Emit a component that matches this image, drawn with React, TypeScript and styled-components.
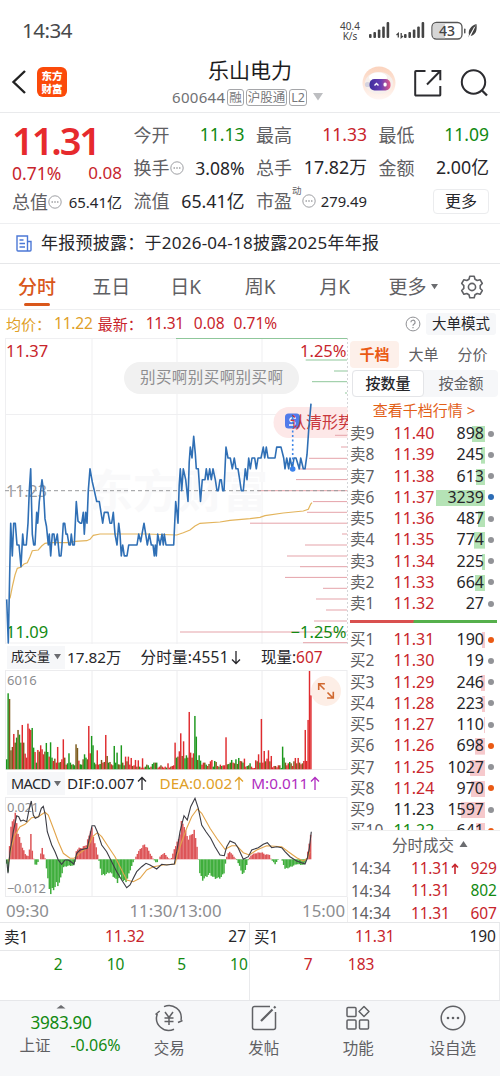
import React from 'react';
import styled, { createGlobalStyle } from 'styled-components';

const RED = '#c8252c';
const GREEN = '#128a12';
const INK = '#26262a';
const GREY = '#5f6063';
const FONT = '"Noto Sans", "Noto Sans CJK SC", sans-serif';

const Global = createGlobalStyle`
  * { box-sizing: border-box; }
  body { margin: 0; background: #fff; font-family: ${FONT}; color: ${INK}; }
  svg { display: block; flex: none; }
  svg text { font-family: ${FONT}; }
`;

const Page = styled.div`
  width: 500px;
  height: 1076px;
  overflow: hidden;
  display: flex;
  flex-direction: column;
  white-space: nowrap;
`;

const Txt = styled.span<{ $s: number; $c?: string; $ls?: number; $w?: number }>`
  font-size: ${p => p.$s}px;
  color: ${p => p.$c ?? INK};
  letter-spacing: ${p => p.$ls ?? 0}px;
  font-weight: ${p => p.$w ?? 400};
  line-height: 1.2;
`;

/* ---------- status bar and header ---------- */
const StatusBar = styled.div`
  height: 58px;
  flex: none;
  display: flex;
  align-items: center;
  justify-content: space-between;
  padding: 3px 22px 0 22px;
`;
const StatusRight = styled.div`
  display: flex;
  align-items: center;
  height: 24px;
`;
const NetSpeed = styled.div`
  width: 24px;
  font-size: 10px;
  line-height: 10px;
  color: #444;
  text-align: center;
  margin-right: 7px;
`;
const Header = styled.header`
  height: 55px;
  flex: none;
  display: grid;
  grid-template-columns: 160px 180px 160px;
  border-bottom: 1px solid #e9eaec;
`;
const HeaderLeft = styled.div`
  display: flex;
  align-items: center;
  padding: 0 0 6px 11px;
  gap: 10px;
`;
const AppLogo = styled.div`
  width: 30px;
  height: 30px;
  border-radius: 6px;
  background: #fb4a0a;
  color: #fff;
  font: 900 10.5px/13px "Noto Sans CJK SC", sans-serif;
  text-align: center;
  padding-top: 2px;
`;
const HeaderMid = styled.div`
  display: flex;
  flex-direction: column;
  align-items: center;
`;
const StockName = styled.div`
  font-size: 21px;
  line-height: 25px;
  color: #1c1c20;
`;
const CodeLine = styled.div`
  display: flex;
  align-items: center;
  gap: 2px;
  height: 28px;
  width: 156px;
  font-size: 13.5px;
  color: #77787b;
`;
const Tag = styled.span`
  border: 1px solid #a5a6a9;
  border-radius: 3px;
  height: 17px;
  line-height: 15px;
  font-size: 12.5px;
  padding: 0 1px;
`;
const HeaderRight = styled.div`
  display: flex;
  align-items: center;
  justify-content: flex-end;
  gap: 18px;
  padding: 0 12px 5px 0;
`;

/* ---------- quote summary ---------- */
const Quote = styled.section`
  height: 111px;
  flex: none;
  display: grid;
  grid-template-columns: 110px 111px 111px 110.5px;
  column-gap: 11.5px;
  padding-left: 12px;
  border-bottom: 1px solid #eeeff1;
`;
const QuoteCol = styled.div`
  display: flex;
  flex-direction: column;
  padding-top: 5px;
`;
const Pair = styled.div<{ $h?: number }>`
  height: ${p => p.$h ?? 33.4}px;
  display: flex;
  align-items: center;
  justify-content: space-between;
`;
const BigPrice = styled.div`
  height: 44px;
  font-size: 38px;
  line-height: 44px;
  font-weight: 600;
  letter-spacing: -2.1px;
  color: #e62a2d;
`;
const LabelWrap = styled.span`
  display: flex;
  align-items: center;
  color: ${GREY};
  font-size: 18px;
  line-height: 22px;
`;
const Sup = styled.sup`
  font-size: 9.5px;
  line-height: 10px;
  align-self: flex-start;
  margin-top: -4px;
`;
const MoreButton = styled.div`
  width: 56px;
  height: 25px;
  border: 1px solid #ebecee;
  border-radius: 4px;
  font-size: 16px;
  line-height: 22px;
  text-align: center;
  margin-left: auto;
`;
const News = styled.div`
  height: 40px;
  flex: none;
  display: flex;
  align-items: center;
  gap: 9px;
  padding: 0 16px 0;
  border-bottom: 1px solid #e6e7e9;
`;

/* ---------- period tabs ---------- */
const Tabs = styled.nav`
  height: 46px;
  flex: none;
  display: grid;
  grid-template-columns: 74px 74.5px 74.5px 74.5px 74.5px 82px 36px;
  border-bottom: 1px solid #eeeff1;
`;
const Tab = styled.div<{ $on?: boolean }>`
  display: flex;
  flex-direction: column;
  align-items: center;
  font-size: 19px;
  line-height: 24px;
  padding-top: 11px;
  color: ${p => (p.$on ? '#d9571b' : GREY)};
  font-weight: ${p => (p.$on ? 500 : 400)};
  &::after {
    content: '';
    width: 26px;
    height: 3px;
    margin-top: 4px;
    border-radius: 2px;
    background: ${p => (p.$on ? '#d9571b' : 'transparent')};
  }
`;
const TabMore = styled.span`
  display: flex;
  align-items: center;
  gap: 4px;
`;
const InfoRow = styled.div`
  height: 27px;
  flex: none;
  display: flex;
  align-items: center;
  padding: 0 4px 0 6px;
`;
const Spacer = styled.span<{ $w?: number }>`
  ${p => (p.$w === undefined ? 'flex: 1;' : `flex: none; width: ${p.$w}px;`)}
`;
const ModeButton = styled.div`
  width: 70px;
  height: 22px;
  margin-left: 5px;
  background: #f6f7f9;
  border-radius: 3px;
  text-align: center;
  font-size: 14.5px;
  line-height: 21px;
`;

/* ---------- main area ---------- */
const Main = styled.div`
  height: 586px;
  flex: none;
  display: grid;
  grid-template-columns: 348px 152px;
  border-bottom: 1px solid #e6e7e9;
`;
const ChartCol = styled.div`
  display: flex;
  flex-direction: column;
`;
const IndicatorRow = styled.div<{ $h: number }>`
  height: ${p => p.$h}px;
  flex: none;
  display: flex;
  align-items: center;
  padding-left: 7px;
`;
const Picker = styled.div`
  width: 58px;
  height: 23px;
  background: #f6f7f9;
  display: flex;
  align-items: center;
  justify-content: space-between;
  padding: 0 4px 0 4px;
  margin-right: 2px;
`;
const TimeAxis = styled.div`
  flex: 1;
  display: flex;
  justify-content: space-between;
  align-items: center;
  padding: 2px 2px 0 6px;
  font-size: 16.8px;
  color: #8c8d90;
  border-right: 1px solid #eee;
`;
const Side = styled.aside`
  display: flex;
  flex-direction: column;
  overflow: hidden;
`;
const SideTabs = styled.div`
  display: flex;
  margin-top: 4px;
  height: 27px;
  flex: none;
  padding-left: 2px;
`;
const SideTab = styled.div<{ $on?: boolean }>`
  width: 49px;
  text-align: center;
  font-size: 15px;
  line-height: 26px;
  border-radius: 4px;
  color: ${p => (p.$on ? '#ea5a14' : GREY)};
  background: ${p => (p.$on ? '#fdf0ea' : 'transparent')};
  font-weight: ${p => (p.$on ? 700 : 400)};
`;
const Toggle = styled.div`
  display: flex;
  flex: none;
  margin: 2px 2px 0 4px;
  height: 27px;
  background: #f6f7f9;
  border-radius: 4px;
`;
const ToggleItem = styled.div<{ $on?: boolean }>`
  width: ${p => (p.$on ? 72 : 74)}px;
  border-radius: 4px;
  border: 1px solid ${p => (p.$on ? '#e4e5e8' : 'transparent')};
  background: ${p => (p.$on ? '#fff' : 'transparent')};
  color: ${p => (p.$on ? INK : GREY)};
  font-weight: ${p => (p.$on ? 500 : 400)};
  font-size: 15px;
  line-height: 25px;
  text-align: center;
`;
const DepthLink = styled.div`
  height: 26px;
  flex: none;
  text-align: center;
  font-size: 15px;
  line-height: 26px;
  color: #e26018;
`;
const Book = styled.div<{ $h: number }>`
  height: ${p => p.$h}px;
  flex: none;
  overflow: hidden;
`;
const BookRow = styled.div`
  height: 21.27px;
  display: grid;
  grid-template-columns: 43.500px 40px 51.500px 12px;
  padding-left: 2px;
  font-size: 16px;
  line-height: 21px;
`;
const BookLabel = styled.span`
  color: ${GREY};
  font-size: 15.5px;
`;
const BookPrice = styled.span<{ $c: string }>`
  color: ${p => p.$c};
`;
const BookVol = styled.span<{ $bar: number; $c: string }>`
  text-align: right;
  padding-right: 1px;
  margin: 3px 0 2px;
  line-height: 14px;
  background: linear-gradient(${p => p.$c}, ${p => p.$c}) right / ${p => p.$bar}px 100% no-repeat;
`;
const Dot = styled.i<{ $c: string }>`
  width: 6px;
  height: 6px;
  border-radius: 50%;
  background: ${p => p.$c};
  align-self: center;
  margin-left: 3px;
`;
const Ratio = styled.div`
  height: 3px;
  flex: none;
  margin: 5px 3px 6px 2px;
  background: linear-gradient(100deg, #d9504f 43%, #56b04c 43.5%);
`;
const TradesHead = styled.div`
  height: 27px;
  flex: none;
  display: flex;
  align-items: center;
  justify-content: center;
  gap: 5px;
  padding-left: 12px;
  border-top: 1px solid #eee;
  font-size: 15.5px;
  color: ${GREY};
`;
const Trade = styled.div`
  height: 22.4px;
  flex: none;
  display: grid;
  grid-template-columns: 60px 51px 35px;
  padding-left: 3px;
  font-size: 15.5px;
  line-height: 22px;
  color: ${GREY};
  & > span { display: flex; align-items: center; gap: 1px; }
  & > span:last-child { justify-content: flex-end; }
`;

/* ---------- bottom quotes and navigation ---------- */
const BestRow = styled.div`
  height: 27.5px;
  flex: none;
  display: grid;
  grid-template-columns: 250px 250px;
  border-bottom: 1px solid #e6e7e9;
`;
const Best = styled.div`
  display: grid;
  grid-template-columns: 101px 1fr auto;
  align-items: center;
  padding: 0 3px 0 4px;
  border-right: 1px solid #e9eaec;
  font-size: 15.5px;
`;
const QueueRow = styled.div`
  height: 49.5px;
  flex: none;
  display: grid;
  grid-template-columns: 250px 250px;
`;
const Queue = styled.div`
  display: grid;
  grid-template-columns: repeat(4, 61.7px);
  padding: 4px 0 0 1px;
  text-align: right;
  border-right: 1px solid #e9eaec;
`;
const Nav = styled.nav`
  flex: 1;
  display: grid;
  grid-template-columns: 122px repeat(4, 94.5px);
  background: #f6f7f9;
  border-top: 1px solid #e6e7ea;
`;
const NavItem = styled.div`
  display: flex;
  flex-direction: column;
  align-items: center;
  padding-top: 3px;
  gap: 4px;
  font-size: 15.5px;
  line-height: 24px;
  color: ${GREY};
`;
const Index = styled.div`
  display: flex;
  flex-direction: column;
  align-items: center;
  padding-top: 4px;
`;
const IndexLine = styled.div`
  display: flex;
  gap: 20px;
  align-items: center;
  padding-left: 18px;
  height: 24px;
`;

/* ---------- chart data ---------- */
const priceTicks: number[][] = [
  [6.7,10],[8.3,14],[10.7,3],[12.3,6],[13.7,3],[15.3,3],[17,5],[19,5],[21,7],[22.7,4],[23.7,5],[26.3,5],[28,3],[29.3,0],[30.7,-2],[32.3,4],[33.7,5],[35,5],[36.7,2],[37.7,3],[39.3,1],[42,-1],[43.5,0],[45,2.6],[46.5,3.3],[48.3,5],[49.3,4],[50.7,6],[52.3,4],[54,4],[55,5],[57.3,4],[59.3,6],[61,6],[62,5],[63.3,3],[64.7,3],[66,4],[67.3,4],[69,5],[70.3,5],[71.3,4],[72.7,5],[74.3,5],[76.3,1],[78,2.8],[80.3,3],[81.7,3],[83.3,2],[84.3,4],[85.7,2],[87,3],[88.3,0],[90,-2],[92.3,-.8],[94.3,0],[96.7,1],[99.3,1],[101,2],[102.7,3],[104.3,2],[108,2],[110,3],[111.7,3],[113.3,2],[115,4],[117,5],[118.7,3],[120,4],[121.3,6],[122.7,5],[124.3,6],[127,6],[128.7,5],[137,5],[138.7,4],[140.7,4.7],[142,4],[144,3],[145.7,4],[147.3,5],[149.3,4],[151.3,5],[153,5],[154.3,6],[155.3,5],[156.3,6],[157.7,4],[160,5],[162,4],[163.3,5],[164.3,4],[166,5],[173.7,5],[175.7,1],[177,2],[178,3],[179.2,-.5],[180.3,-2],[181.7,0],[183.3,-2],[185.7,-1],[188,1],[189.2,-2.6],[190.3,-4],[192,-3],[193.7,-5],[195.3,-3.4],[196.3,-2],[198.3,-2],[200.5,1],[202.3,-1],[205,-1],[206.3,-2],[208,-1],[209.7,-2],[211.3,-1],[213,-2],[215.3,-1],[217,0],[218.3,0],[220,-1],[221.3,-1],[222.7,0],[224,0],[226,-4],[228,-3],[230.3,-3],[232.3,-2],[234.3,-3],[236,-2],[238,-2],[239.7,-1],[241.3,0],[243.3,0],[245.3,-2],[247,-1],[248.7,-3],[250.3,-2],[252,-3],[254.7,-3],[256.3,-2],[258,-3],[261,-3],[263.3,-4],[264.7,-3],[266.3,-4],[268,-3],[275,-3],[276.7,-4],[281,-4],[283.7,-3],[285,-2],[286.7,-3],[288.7,-2],[290,-3],[292.3,-2],[294,-3],[296,-3],[299.3,-2],[300.7,-3],[303.3,-2],[305,-2],[307,-3.3],[308.7,-5.6],[311,-8],
];
const priceLine = priceTicks.map(([x, l]) => `${x},${(490.6 + l * 10.88).toFixed(1)}`).join(' ');

const tri = (s: string, dx: number, dy: number) =>
  s.split(' ').map(p => p.split(',').map(Number)).map(([x, y]) => [x / 3 + dx, y / 3 + dy]);
const pts = (a: number[][]) => a.map(([x, y]) => `${x.toFixed(1)},${y.toFixed(1)}`).join(' ');

const averageLine = pts(tri('30,355 38,315 45,285 52,265 62,262 72,252 82,248 90,230 97,212 115,210 125,198 135,190 150,188 210,188 225,184 260,182 270,178 280,166 300,162 440,162 530,165 550,158 570,150 585,138 600,130 660,126 690,121 750,116 780,112 795,107 850,99 880,96 910,93 925,88 932,72 936,68', 0, 480));
const difLine = pts([
  ...tri('20,585 24,625 30,560 40,500 50,452 56,455 62,468 70,465 80,470 88,430 94,408 100,450 106,460 116,455 124,430 130,424 136,450 142,500 155,540 165,560 175,585 185,598 195,585 205,585 215,592 222,598 230,565 240,555 262,550 268,520 276,482 284,482 292,500 305,540 320,560 335,590 350,620 365,645 380,668 390,660 400,640 410,620 425,605 438,595 450,600 470,612 485,598 500,600', 0, 665),
  ...tri('13,597 20,560 30,500 42,452 52,465 62,425 75,400 85,430 95,480 108,500 122,520 135,545 150,570 163,572 170,545 180,528 195,535 205,550 220,583 235,575 245,555 265,548 280,538 292,533 305,548 320,545 335,548 345,560 360,575 380,588 405,597 412,580 418,550 424,500', 170, 665),
]);
const deaLine = pts([
  ...tri('26,590 35,545 45,510 60,485 75,478 95,458 115,455 135,442 145,450 160,490 175,530 190,565 210,580 222,580 245,560 265,545 278,515 292,503 305,515 325,545 345,575 365,615 380,645 400,650 420,640 440,615 460,605 490,600', 0, 665),
  ...tri('15,597 22,570 35,530 50,490 65,455 82,432 95,445 120,490 140,520 165,553 185,542 200,542 220,563 238,570 260,555 290,542 335,545 355,560 380,578 400,588 412,580 420,560', 170, 665),
]);

const askLevels = [[338.5, 176], [360, 305.7], [371, 334], [381.7, 312], [393, 345]];
const bidLevels = [[435.3, 335], [447, 341], [458.3, 309], [469, 298], [479.6, 296], [490.7, 258], [501.6, 313], [512.3, 307], [523.2, 250], [534, 342], [545, 305], [556, 287], [566.7, 300], [577.4, 285], [588.3, 323], [599, 316], [610, 326], [621, 314], [632, 180], [642.7, 303]];

// Bar heights; suffix g = falling minute, m = mixed, none = rising minute
const volumes = '30g 228g 211m 57m 67m 106 80m 95g 118m 104g 80g 133 80m 47 35 137 122 118 124g 65g 52 20g 58 53m 72 60 45 53m 79g 52g 38 81g 35g 25 32m 20 67 20g 22m 30 90 35m 14 18g 48g 20g 14m 15g 12g 75m 64m 26 15g 14g 30m 45g 35g 30m 130 48 100g 72g 20g 15m 57 14 16g 28m 20 22m 103 40m 20g 22m 15 12m 70g 20g 50g 15m 14m 72g 20m 12g 38 24m 38 14 34 10m 12 28 8m 27 8g 5 33 5 8g 14m 12g 5g 8 16g 20g 20m 20g 5 8 12m 8 5 8 5g 18 5 8m 10 12 80 35g 38m 54 108 40m 84 33g 42g 35m 172 50 35m 48 160g 98g 28m 42g 26g 14 20 20m 14g 10 16m 24 28 8g 25g 22m 10 8g 14 10g 12 12 96 15m 16g 20m 28g 20 18m 30g 16m 34g 25 24m 20g 32 8 10g 12m 18g 8 4 4 27 24m 45 20g 151 20 55 24m 32 57 24m 40 6 10 10m 6 12 12m 4g 68g 35g 20m 12 18 22g 18m 10 24m 34 18m 34 20m 15 18m 25 118 25 148 295 222'.split(' ');
const volPitch = 304.2 / (volumes.length - 1);
const volColor = (v: string) => (v.endsWith('g') ? '#1c971c' : v.endsWith('m') ? '#7b5a1c' : '#df2b2e');

const macdProfile: number[][] = [
  ...'19,-5 24,-45 26,0 30,70 34,110 40,130 45,143 49,120 54,85 60,60 68,35 76,15 84,10 90,40 93,95 96,30 100,5 103,-5 106,-22 112,-12 118,0 121,12 127,38 131,15 136,0 140,-35 145,-75 152,-110 158,-90 163,-95 168,-75 175,-82 182,-60 190,-25 205,-20 222,-20 226,0 229,28 235,35 240,35 248,38 258,45 266,70 274,105 280,70 288,38 294,8 298,-10 305,-50 315,-48 330,-40 345,-60 352,-72 360,-50 370,-70 380,-68 390,-35 398,-12 404,0 412,18 420,32 433,47 442,35 452,15 460,0 470,-12 476,0 482,12 492,20 500,10 508,0 515,5'.split(' ').map(p => p.split(',').map(Number)),
  ...'15,40 20,50 28,70 34,115 42,110 48,80 55,65 65,80 72,90 80,50 85,0 88,-40 97,-65 108,-55 120,-45 130,-58 145,-60 155,-55 162,-42 168,0 172,15 180,25 190,10 200,-2 210,-25 219,-52 228,-25 235,0 245,15 260,20 275,22 285,15 298,15 303,0 315,-15 325,0 335,0 345,-30 360,-25 380,-15 400,-18 408,-5 412,20 418,50 424,95'.split(' ').map(p => p.split(',').map(Number)).map(([x, h]) => [x + 510, h]),
];
const macdAt = (x: number) => {
  for (let i = 1; i < macdProfile.length; i++) {
    const [x0, a] = macdProfile[i - 1];
    const [x1, b] = macdProfile[i];
    if (x <= x1) return a + ((b - a) * (x - x0)) / (x1 - x0);
  }
  return macdProfile[macdProfile.length - 1][1];
};

/* ---------- icons ---------- */
const Caret = ({ up, w = 8, c = '#6b6c70' }: { up?: boolean; w?: number; c?: string }) => (
  <svg width={w} height={w * 0.75} viewBox="0 0 8 6"><path d={up ? 'M4 0l4 6H0z' : 'M0 0h8L4 6z'} fill={c} /></svg>
);
const Dots = () => (
  <svg width="14" height="14" viewBox="0 0 14 14"><circle cx="7" cy="7" r="6.2" fill="none" stroke="#939498" strokeWidth=".9" /><g fill="#85868a"><circle cx="4.2" cy="7" r=".8" /><circle cx="7" cy="7" r=".8" /><circle cx="9.8" cy="7" r=".8" /></g></svg>
);
const Up = ({ c }: { c: string }) => (
  <svg width="14" height="15" viewBox="0 0 14 15" fill="none" stroke={c} strokeWidth="1.300"><path d="M7 14V1.500M3 5.500l4-4 4 4" /></svg>
);
const Signal = () => (
  <svg width="21" height="17" viewBox="0 0 21 17" fill="#444"><rect x="0" y="12" width="2.6" height="4" rx="1" /><rect x="4.4" y="10" width="2.6" height="6" rx="1" /><rect x="8.8" y="7.5" width="2.6" height="8.5" rx="1" /><rect x="13.2" y="4.5" width="2.6" height="11.5" rx="1" /><rect x="17.6" y="0" width="2.6" height="16" rx="1" /></svg>
);

const Status = () => (
  <StatusBar>
    <Txt $s={20.5} $c="#47484a" $ls={-0.5}>14:34</Txt>
    <StatusRight>
      <NetSpeed>40.4<br />K/s</NetSpeed>
      <Signal />
      <Spacer $w={6} />
      <svg width="8" height="17" viewBox="0 0 8 17" fill="none" stroke="#444" strokeWidth="1.3"><path d="M2.3 15.5v-4L.5 13M5.2 11v4.500L7 14" /></svg>
      <Signal />
      <Spacer $w={6} />
      <svg width="47" height="20" viewBox="0 0 47 20">
        <rect x="1" y="1.5" width="30" height="16.5" rx="4.5" fill="#fff" stroke="#555" strokeWidth="1.3" />
        <path d="M5 2.2h9v15.100H5a3.300 3.300 0 0 1-3.300-3.300v-8.500a3.300 3.300 0 0 1 3.300-3.300z" fill="#d6d6d6" />
        <text x="16" y="14.800" fontSize="14" fontWeight="500" textAnchor="middle" fill="#444">43</text>
        <rect x="33" y="7.500" width="1.500" height="5" rx=".7" fill="#555" />
        <path d="M45.500 3c-6 2-8.500 6-7.500 11l-1 2.500M45.500 3c.8 6-.5 11-6 12z" fill="#444" />
        <path d="M43.500 6l-4.500 9" stroke="#fff" strokeWidth=".8" />
      </svg>
    </StatusRight>
  </StatusBar>
);

const TopBar = () => (
  <Header>
    <HeaderLeft>
      <svg width="16" height="26" viewBox="0 0 16 26" fill="none" stroke="#222" strokeWidth="2.400"><path d="M14 2L2.500 13L14 24" /></svg>
      <AppLogo>东方<br />财富</AppLogo>
    </HeaderLeft>
    <HeaderMid>
      <StockName>乐山电力</StockName>
      <CodeLine>
        <Txt $s={15} $c="#707174" $ls={0.3}>600644</Txt>
        <Tag>融</Tag><Tag>沪股通</Tag><Tag>L2</Tag>
        <Spacer $w={2} /><Caret w={10} c="#bdbec1" />
      </CodeLine>
    </HeaderMid>
    <HeaderRight>
      <svg width="34" height="34" viewBox="0 0 34 34">
        <defs>
          <linearGradient id="halo" x1="0" y1="0" x2="0" y2="1"><stop offset="0" stopColor="#fbd3bd" /><stop offset="1" stopColor="#fff6f2" /></linearGradient>
          <linearGradient id="visor"><stop offset="0" stopColor="#3e2d9d" /><stop offset=".55" stopColor="#6a3db4" /><stop offset="1" stopColor="#e35a86" /></linearGradient>
        </defs>
        <circle cx="17" cy="17" r="16.500" fill="url(#halo)" />
        <ellipse cx="17" cy="17" rx="14" ry="11" fill="#f6efec" />
        <ellipse cx="16" cy="11.500" rx="9" ry="5" fill="#fff" />
        <circle cx="5.500" cy="18.500" r="2.600" fill="#d5d3df" />
        <rect x="7.500" y="13" width="21" height="11.500" rx="5" fill="url(#visor)" />
        <path d="M12.500 19.500l2-2 2 2" fill="none" stroke="#fff" strokeWidth="1.400" />
        <rect x="21.500" y="16.500" width="3.200" height="4" rx="1.500" fill="#fff" />
      </svg>
      <svg width="28" height="28" viewBox="0 0 28 28" fill="none" stroke="#2c2c30" strokeWidth="2"><path d="M11.500 2H2a.8.8 0 0 0-.8.8v23a.8.8 0 0 0 .8.8h23.500a.8.8 0 0 0 .8-.8V17M13 15.500L26 2.300M17.500 2h8.800v9.300" /></svg>
      <svg width="28" height="28" viewBox="0 0 28 28" fill="none" stroke="#2c2c30" strokeWidth="2"><circle cx="13.500" cy="13" r="11.700" /><path d="M22 21.500l5 5" strokeWidth="2.300" /></svg>
    </HeaderRight>
  </Header>
);

const Item = ({ label, value, c = INK, s = 17.5, dots, sup }: { label: string; value: string; c?: string; s?: number; dots?: boolean; sup?: string }) => (
  <Pair>
    <LabelWrap>{label}{sup && <Sup>{sup}</Sup>}{dots && <Dots />}</LabelWrap>
    <Txt $s={s} $c={c}>{value}</Txt>
  </Pair>
);

const QuoteBlock = () => (
  <Quote>
    <QuoteCol>
      <BigPrice>11.31</BigPrice>
      <Pair $h={23}><Txt $s={17.5} $c={RED}>0.71%</Txt><Txt $s={17} $c={RED}>0.08</Txt></Pair>
      <Item label="总值" dots value="65.41亿" s={15} />
    </QuoteCol>
    <QuoteCol>
      <Item label="今开" value="11.13" c={GREEN} />
      <Item label="换手" dots value="3.08%" />
      <Item label="流值" value="65.41亿" s={17.8} />
    </QuoteCol>
    <QuoteCol>
      <Item label="最高" value="11.33" c={RED} />
      <Item label="总手" value="17.82万" s={17.8} />
      <Item label="市盈" sup="动" dots value="279.49" s={14.8} />
    </QuoteCol>
    <QuoteCol>
      <Item label="最低" value="11.09" c={GREEN} />
      <Item label="金额" value="2.00亿" s={17.8} />
      <Pair><MoreButton>更多</MoreButton></Pair>
    </QuoteCol>
  </Quote>
);

/* ---------- charts ---------- */
const PriceChart = () => (
  <svg width="348" height="307" viewBox="0 337 348 307">
    <g stroke="#efeff1" strokeWidth="1"><path d="M5.500 338v306M92 338v306M177 338v306M262 338v306M5 338.500h342M5 414.500h342M5 566.500h342M5 643h342" fill="none" /></g>
    <path d="M347.500 338v306" stroke="#d4d5d8" strokeDasharray="2 2" />
    <text x="88" y="508" fontSize="45" fontWeight="700" fill="#f9f9fa">东方财富</text>
    <rect x="124" y="362" width="175" height="32" rx="16" fill="#f1f1f1" />
    <text x="140" y="383" fontSize="15.500" fill="#8d8d8f" textLength="143">别买啊别买啊别买啊</text>
    <path d="M347.500 407H289a15.500 15.500 0 0 0 0 31h58.500z" fill="#fde8e8" />
    {askLevels.map(([y, x]) => <path key={y} d={`M${x} ${y}H347`} stroke="#8fc79b" />)}
    {bidLevels.map(([y, x]) => <path key={y} d={`M${x} ${y}H347`} stroke="#e5a3a9" />)}
    <path d="M5 490.700h342" stroke="#98999c" strokeDasharray="4 3" />
    <text x="6" y="497" fontSize="16" fill="#9a9b9e">11.23</text>
    <polyline points={averageLine} fill="none" stroke="#e3b45c" strokeWidth="1.200" />
    <text x="6" y="357" fontSize="16.500" fill={RED}>11.37</text>
    <text x="346.500" y="357" fontSize="16.500" fill={RED} textAnchor="end">1.25%</text>
    <text x="6" y="638" fontSize="16.500" fill={GREEN}>11.09</text>
    <text x="346.500" y="638" fontSize="16.500" fill={GREEN} textAnchor="end">−1.25%</text>
    <rect x="285" y="413.500" width="15" height="15" rx="3.500" fill="#527bea" />
    <path d="M296 418h-5a2 2 0 0 0 0 3.500h3a2 2 0 0 1 0 3.500h-5" fill="none" stroke="#fff" strokeWidth="1.400" />
    <text x="290" y="428" fontSize="16" fill="#c9383d">认清形势</text>
    <polyline points={priceLine} fill="none" stroke="#2f6fb5" strokeWidth="1.600" strokeLinejoin="round" />
    <path d="M292.700 417v50" stroke="#3f86e8" strokeWidth="1.600" strokeDasharray="2 2.500" />
    <circle cx="292.700" cy="469" r="2.800" fill="#3b82ec" />
  </svg>
);

const VolumeChart = () => (
  <svg width="348" height="100" viewBox="0 670 348 100">
    <path d="M5.500 670v100M92 670v100M177 670v100M262 670v100M347 670v100M5 670.500h342M5 769.500h342" stroke="#ececee" fill="none" />
    {volumes.map((v, i) => {
      const h = parseInt(v, 10) / 3;
      return <rect key={i} x={6 + i * volPitch} y={769.3 - h} width={volPitch + 0.03} height={h} fill={volColor(v)} />;
    })}
    <text x="7" y="685" fontSize="13" fill="#8c8d90">6016</text>
    <circle cx="326" cy="691" r="15" fill="#fdeee6" />
    <path d="M324.500 689.500l-5.500-5.500M318.700 690v-6.200h6.200M327.500 692.500l5.500 5.500M333.300 691.800v6.200h-6.200" fill="none" stroke="#d0682f" strokeWidth="1.600" />
  </svg>
);

const MacdChart = () => (
  <svg width="348" height="100" viewBox="0 797 348 100">
    <path d="M5.500 797v100M92 797v100M177 797v100M262 797v100M347 797v100M5 797.500h342M5 896.500h342" stroke="#ececee" fill="none" />
    {Array.from({ length: 215 }, (_, i) => {
      const x = 6 + i * 1.42;
      const h = macdAt(x * 3 + 2) * (1 - (i % 3) * 0.05) / 3;
      return <rect key={i} x={x} y={h > 0 ? 859.3 - h : 859.3} width="1.500" height={Math.abs(h)} fill={h > 0 ? '#dd5558' : '#3fae3c'} />;
    })}
    <text x="7" y="812" fontSize="13" fill="#8c8d90" textLength="32">0.021</text>
    <text x="7" y="893" fontSize="13" fill="#8c8d90" textLength="39">−0.012</text>
    <polyline points={deaLine} fill="none" stroke="#e2a44a" strokeWidth="1.100" />
    <polyline points={difLine} fill="none" stroke="#3c3c44" strokeWidth="1.100" />
  </svg>
);

/* ---------- order book ---------- */
const SELL = '#b5e3b6';
const BUY = '#f6c9cc';
const sells: [string, string, number, string?][] = [
  ['11.40', '898', 13], ['11.39', '245', 4], ['11.38', '613', 9], ['11.37', '3239', 49, '#2c6cb5'], ['11.36', '487', 7],
  ['11.35', '774', 11], ['11.34', '225', 3], ['11.33', '664', 10], ['11.32', '27', 0],
];
const buys: [string, string, number, string?][] = [
  ['11.31', '190', 3, '#ea5a14'], ['11.30', '19', 0], ['11.29', '246', 4], ['11.28', '223', 3], ['11.27', '110', 1],
  ['11.26', '698', 10, '#ea5a14'], ['11.25', '1027', 15], ['11.24', '970', 14, '#ea5a14'], ['11.23', '1597', 24], ['11.22', '641', 9, '#ea5a14'],
];
const priceColor = (p: string) => (p === '11.23' ? INK : p === '11.22' ? GREEN : RED);

const OrderBook = () => (
  <Side>
    <SideTabs><SideTab $on>千档</SideTab><SideTab>大单</SideTab><SideTab>分价</SideTab></SideTabs>
    <Toggle><ToggleItem $on>按数量</ToggleItem><ToggleItem>按金额</ToggleItem></Toggle>
    <DepthLink>查看千档行情 &gt;</DepthLink>
    <Book $h={192}>
      {sells.map(([p, v, w, d], i) => (
        <BookRow key={p}>
          <BookLabel>卖{9 - i}</BookLabel><BookPrice $c={priceColor(p)}>{p}</BookPrice>
          <BookVol $bar={w} $c={SELL}>{v}</BookVol><Dot $c={d ?? '#929397'} />
        </BookRow>
      ))}
    </Book>
    <Ratio />
    <Book $h={201}>
      {buys.map(([p, v, w, d], i) => (
        <BookRow key={p}>
          <BookLabel>买{i + 1}</BookLabel><BookPrice $c={priceColor(p)}>{p}</BookPrice>
          <BookVol $bar={w} $c={BUY}>{v}</BookVol><Dot $c={d ?? '#929397'} />
        </BookRow>
      ))}
    </Book>
    <TradesHead>分时成交<Caret up w={9} /></TradesHead>
    {[['929', RED], ['802', GREEN], ['607', RED]].map(([v, c], i) => (
      <Trade key={v}>
        <span>14:34</span>
        <Txt $s={15.5} $c={RED} $ls={-0.2}>11.31{i === 0 && <svg width="8" height="11" viewBox="0 0 8 11" fill="none" stroke={RED} strokeWidth="1.600"><path d="M4 11V1.500M1 4.500l3-3 3 3" /></svg>}</Txt>
        <Txt $s={15.5} $c={c}>{v}</Txt>
      </Trade>
    ))}
  </Side>
);

const navIcon = { width: 28, height: 28, viewBox: '0 0 28 28', fill: 'none', stroke: '#606165', strokeWidth: 1.5 };

export default function App() {
  return (
    <Page>
      <Global />
      <Status />
      <TopBar />
      <QuoteBlock />
      <News>
        <svg width="16" height="17" viewBox="0 0 16 17" fill="none" stroke="#4c78d6" strokeWidth="1.400"><path d="M1 1h10.500v15H2a1 1 0 0 1-1-1zM11.500 6.500H15V15a1 1 0 0 1-1 1h-2.500M3.500 5h4M3.500 8.500h5.500M3.500 12h5.500" /></svg>
        <Txt $s={17} $ls={0.25}>年报预披露：于2026-04-18披露2025年年报</Txt>
      </News>
      <Tabs>
        <Tab $on>分时</Tab><Tab>五日</Tab><Tab>日K</Tab><Tab>周K</Tab><Tab>月K</Tab>
        <Tab><TabMore>更多<Caret w={7} /></TabMore></Tab>
        <Tab>
          <svg width="24" height="24" viewBox="0 0 24 24" fill="none" stroke="#606165" strokeWidth="1.600" strokeLinejoin="round"><path d="M9.800 1.300h4.400l.8 2.900 2.200 1.300 2.900-.8 2.200 3.800-2.100 2.100v2.800l2.100 2.100-2.200 3.800-2.900-.8-2.200 1.300-.8 2.900H9.800L9 19.800l-2.200-1.300-2.900.8-2.200-3.800 2.100-2.100v-2.800L1.700 8.500l2.200-3.800 2.900.8L9 4.200z" /><circle cx="12" cy="12" r="3.600" /></svg>
        </Tab>
      </Tabs>
      <InfoRow>
        <Txt $s={15} $c="#e0a028">均价：</Txt><Spacer $w={3} /><Txt $s={15.5} $c="#e0a028" $ls={-0.2}>11.22</Txt>
        <Spacer $w={5} /><Txt $s={15} $c={RED}>最新：</Txt><Spacer $w={3} /><Txt $s={15.5} $c={RED} $ls={-0.3}>11.31</Txt>
        <Spacer $w={10} /><Txt $s={15.5} $c={RED}>0.08</Txt><Spacer $w={9} /><Txt $s={15.5} $c={RED}>0.71%</Txt>
        <Spacer />
        <svg width="16" height="16" viewBox="0 0 16 16" fill="none" stroke="#909195"><circle cx="8" cy="8" r="6.900" /><path d="M5.900 6.300a2.100 2.100 0 1 1 3 1.900c-.7.400-.9.700-.9 1.500M8 11v1.200" strokeWidth="1.200" /></svg>
        <ModeButton>大单模式</ModeButton>
      </InfoRow>
      <Main>
        <ChartCol>
          <PriceChart />
          <IndicatorRow $h={26}>
            <Picker><Txt $s={13}>成交量</Txt><Caret w={7} /></Picker>
            <Txt $s={15.3}>17.82万</Txt><Spacer $w={19} />
            <Txt $s={15.5} $ls={0.3}>分时量:4551</Txt><Spacer $w={1} />
            <svg width="12" height="15" viewBox="0 0 12 15" fill="none" stroke={INK} strokeWidth="1.300"><path d="M6 1v12.500M2 9.500l4 4 4-4" /></svg>
            <Spacer $w={19} /><Txt $s={15.5}>现量:</Txt><Txt $s={15.5} $c={RED}>607</Txt>
          </IndicatorRow>
          <VolumeChart />
          <IndicatorRow $h={27}>
            <Picker><Txt $s={14.5} $ls={-0.6}>MACD</Txt><Caret w={7} /></Picker>
            <Txt $s={15.3}>DIF:0.007</Txt><Up c={INK} /><Spacer $w={11} />
            <Txt $s={15.3}  $c="#e0a028">DEA:0.002</Txt><Up c="#e0a028" /><Spacer $w={5} />
            <Txt $s={15.3} $c="#b02cc0">M:0.011</Txt><Up c="#b02cc0" />
          </IndicatorRow>
          <MacdChart />
          <TimeAxis><span>09:30</span><span>11:30/13:00</span><span>15:00</span></TimeAxis>
        </ChartCol>
        <OrderBook />
      </Main>
      <BestRow>
        <Best><span>卖1</span><Txt $s={15.5} $c={RED}>11.32</Txt><span>27</span></Best>
        <Best><span>买1</span><Txt $s={15.5} $c={RED}>11.31</Txt><span>190</span></Best>
      </BestRow>
      <QueueRow>
        <Queue>{['2', '10', '5', '10'].map((v, i) => <Txt key={i} $s={15.5} $c={GREEN}>{v}</Txt>)}</Queue>
        <Queue>{['7', '183'].map(v => <Txt key={v} $s={15.5} $c={RED}>{v}</Txt>)}</Queue>
      </QueueRow>
      <Nav>
        <Index>
          <svg width="10" height="8" viewBox="0 0 10 8"><path d="M5 0l4.500 3.500h-9z" fill="#6b6c70" /></svg>
          <Txt $s={17.2} $c={GREEN} $ls={-0.4}>3983.90</Txt>
          <IndexLine><Txt $s={15.5} $c={GREY}>上证</Txt><Txt $s={16} $c={GREEN}>-0.06%</Txt></IndexLine>
        </Index>
        <NavItem>
          <svg {...navIcon}><path d="M9 2.600A12.200 12.200 0 0 1 26 16M19 25.200A12.200 12.200 0 0 1 2.300 10M.5 10.500l4.200-3.500M27.500 16.500l-4.500 2M10 8l4 5.500 4-5.500M14 13.500V21M9.500 14h9M9.500 17.500h9" /></svg>
          交易
        </NavItem>
        <NavItem>
          <svg {...navIcon}><path d="M20 2.500H4.500a2 2 0 0 0-2 2v19a2 2 0 0 0 2 2h19a2 2 0 0 0 2-2V8" /><path d="M11 17L22.500 5.500M24 4l1.500-1.500" strokeWidth="2.200" /></svg>
          发帖
        </NavItem>
        <NavItem>
          <svg {...navIcon}><rect x="3" y="3.500" width="9" height="9" rx="1" /><rect x="3" y="16" width="9" height="9" rx="1" /><rect x="15.500" y="16" width="9" height="9" rx="1" /><path d="M20 2.500l5 5-5 5-5-5z" strokeLinejoin="round" /></svg>
          功能
        </NavItem>
        <NavItem>
          <svg {...navIcon}><circle cx="14" cy="14" r="11.800" /><g fill="#606165" stroke="none"><circle cx="9" cy="14" r="1.300" /><circle cx="14" cy="14" r="1.300" /><circle cx="19" cy="14" r="1.300" /></g></svg>
          设自选
        </NavItem>
      </Nav>
    </Page>
  );
}
